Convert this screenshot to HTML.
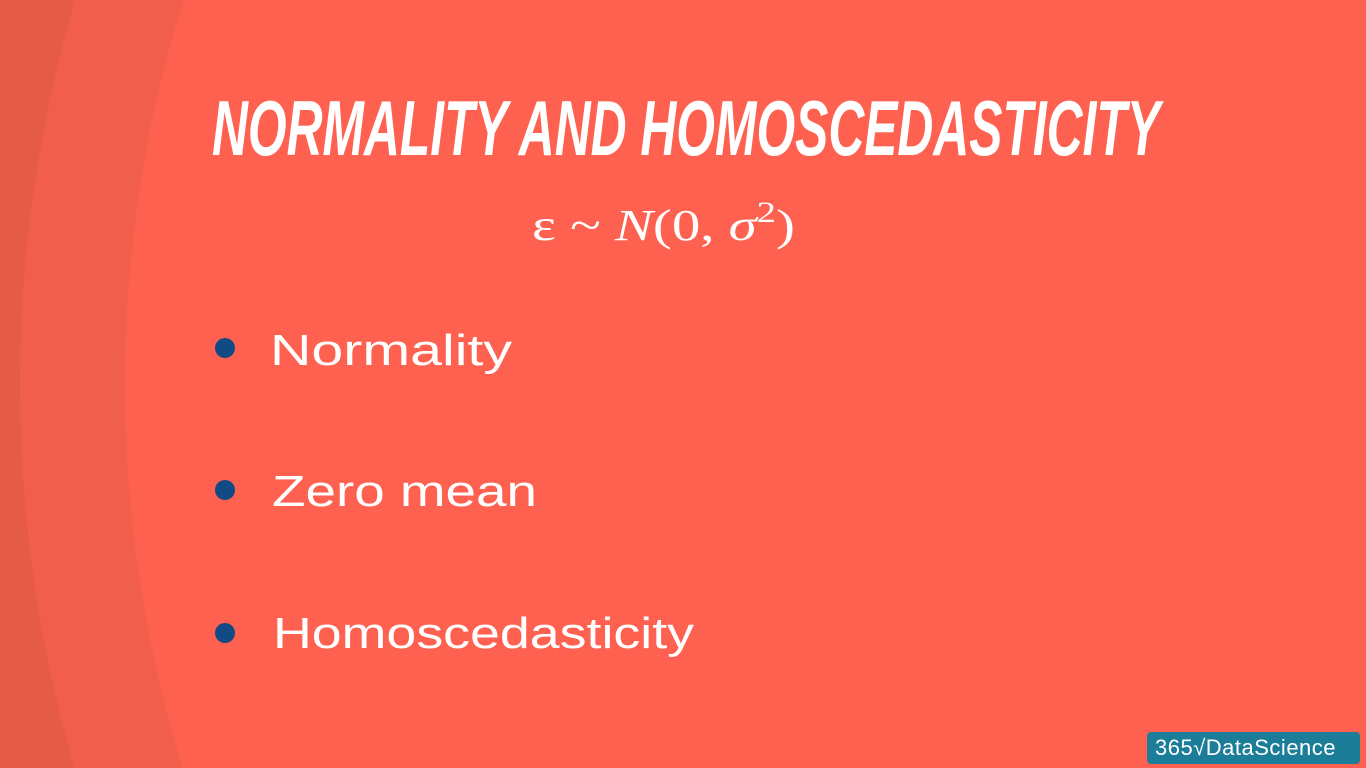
<!DOCTYPE html>
<html><head><meta charset="utf-8"><style>
html,body{margin:0;padding:0;width:1366px;height:768px;overflow:hidden}
body{position:relative;background:#e65a48;font-family:"Liberation Sans",sans-serif}
.c{position:absolute;border-radius:50%}
.dot{position:absolute;width:20px;height:20px;border-radius:50%;background:#124a85;left:215px}
.logo{position:absolute;left:1147px;top:732px;width:213px;height:32px;background:#1b7d98;border-radius:4px;color:#fff;font-size:22px;line-height:32px;padding-left:8px;box-sizing:border-box;letter-spacing:0.5px;overflow:hidden}
</style></head><body>
<div style="position:absolute;left:0;top:0;width:1366px;height:768px;overflow:hidden">
<div class="c" style="left:20px;top:-900px;width:2400px;height:2570px;background:#f15f4c"></div>
<div class="c" style="left:125px;top:-840px;width:2300px;height:2450px;background:#ff6150"></div>
</div>
<svg style="position:absolute;left:0;top:0;display:block" width="1366" height="768">
<text x="212" y="155" textLength="948" lengthAdjust="spacingAndGlyphs" fill="#fff" font-family="Liberation Sans Narrow, Liberation Sans, sans-serif" font-weight="bold" font-style="italic" font-size="78">NORMALITY AND HOMOSCEDASTICITY</text>
<text x="532" y="240" fill="#fff" font-family="Liberation Serif, serif" font-size="44" textLength="263" lengthAdjust="spacingAndGlyphs"><tspan>ε ~ </tspan><tspan font-style="italic">N</tspan><tspan>(0, </tspan><tspan font-style="italic">σ</tspan><tspan dy="-18" font-size="30">2</tspan><tspan dy="18">)</tspan></text>
<g fill="#fff" font-family="Liberation Sans, sans-serif" font-size="44">
<text x="270" y="365" textLength="242" lengthAdjust="spacingAndGlyphs">Normality</text>
<text x="272" y="506" textLength="265" lengthAdjust="spacingAndGlyphs">Zero mean</text>
<text x="273" y="648" textLength="421" lengthAdjust="spacingAndGlyphs">Homoscedasticity</text>
</g>
</svg>
<div class="dot" style="top:338px"></div>
<div class="dot" style="top:480px"></div>
<div class="dot" style="top:623px"></div>
<div class="logo">365√DataScience</div>
</body></html>
